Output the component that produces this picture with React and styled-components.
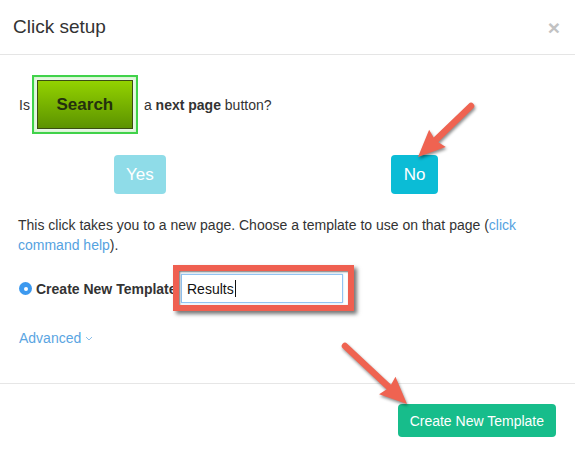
import React from "react";
import styled, { createGlobalStyle } from "styled-components";

const GlobalStyle = createGlobalStyle`
  html, body {
    margin: 0;
    padding: 0;
    background: #fff;
  }
  body {
    font-family: "Liberation Sans", Arial, Helvetica, sans-serif;
    color: #333;
  }
`;

const Modal = styled.div`
  position: relative;
  width: 575px;
  height: 455px;
  background: #fff;
  overflow: hidden;
`;

const Header = styled.div`
  display: flex;
  align-items: center;
  justify-content: space-between;
  height: 54px;
  padding: 0 15px 0 13px;
  border-bottom: 1px solid #e5e5e5;
`;

const Title = styled.h3`
  margin: 0;
  font-size: 19px;
  font-weight: 400;
  color: #333;
`;

const Close = styled.button`
  border: none;
  background: none;
  padding: 0;
  font-family: inherit;
  font-size: 21px;
  font-weight: 700;
  color: #c2c2c2;
  line-height: 1;
  cursor: pointer;
`;

const Body = styled.div`
  padding: 20px 18px 35px 18px;
  font-size: 14px;
`;

const Question = styled.div`
  display: flex;
  align-items: center;
  gap: 2px;
  padding-left: 1px;
`;

const QuestionTail = styled.span`
  margin-left: 4px;
  b {
    font-weight: 700;
  }
`;

const SearchShot = styled.span`
  display: inline-flex;
  padding: 3px;
  border: 2px solid #40d24a;
  background: #e9f8e6;
  box-shadow: inset 0 0 3px #bfeeb8;
`;

const SearchButton = styled.span`
  display: flex;
  align-items: center;
  justify-content: center;
  box-sizing: border-box;
  width: 96px;
  height: 49px;
  border: 1px solid #3b4d12;
  background: linear-gradient(#93d200, #5c9300);
  font-size: 17px;
  font-weight: 700;
  color: #24300e;
`;

const Choices = styled.div`
  display: flex;
  margin-top: 21px;
  padding-left: 96px;
  gap: 225px;
`;

const ChoiceButton = styled.button`
  height: 39px;
  padding: 0 ${(p) => (p.$muted ? "12px" : "13px")};
  border: none;
  border-radius: 4px;
  background: ${(p) => (p.$muted ? "#8fdce8" : "#0bbcd6")};
  color: #fff;
  font-family: inherit;
  font-size: 17px;
  cursor: pointer;
`;

const Paragraph = styled.p`
  margin: 21px 0 0;
  line-height: 20px;
  color: #333;
`;

const Link = styled.a`
  color: #55a2df;
  text-decoration: none;
`;

const TemplateRow = styled.div`
  display: flex;
  align-items: center;
  margin-top: 19px;
  padding-left: 1px;
`;

const Radio = styled.span`
  display: inline-flex;
  align-items: center;
  justify-content: center;
  width: 13px;
  height: 13px;
  border-radius: 50%;
  background: #3c99ef;
  margin-right: 4px;

  &::after {
    content: "";
    width: 4px;
    height: 4px;
    border-radius: 50%;
    background: #fff;
  }
`;

const RadioLabel = styled.span`
  width: 145px;
  white-space: nowrap;
  font-weight: 700;
  color: #333;
`;

const FieldWrap = styled.span`
  position: relative;
  display: inline-flex;
`;

const Field = styled.span`
  display: inline-flex;
  align-items: center;
  box-sizing: border-box;
  width: 162px;
  height: 29px;
  padding: 0 5px;
  border: 1px solid #93c4f2;
  box-shadow: 0 0 2px #b7d8f7;
  background: #fff;
  font-size: 14px;
  color: #111;
`;

const Caret = styled.span`
  display: inline-block;
  width: 1px;
  height: 17px;
  background: #111;
  margin-left: 1px;
`;

const Highlight = styled.span`
  position: absolute;
  top: -9px;
  left: -8px;
  right: -11px;
  bottom: -8px;
  border: 6px solid #ef5f50;
  box-shadow: 3px 3px 4px rgba(0, 0, 0, 0.55),
    inset 1px 1px 2px rgba(0, 0, 0, 0.55);
  pointer-events: none;
`;

const Advanced = styled.a`
  display: inline-flex;
  align-items: center;
  gap: 4px;
  margin-top: 25px;
  line-height: 20px;
  color: #5aa5e2;
  text-decoration: none;
  padding-left: 1px;
`;

const Footer = styled.div`
  display: flex;
  justify-content: flex-end;
  padding: 20px 19px 20px 0;
  border-top: 1px solid #e6e6e6;
`;

const PrimaryButton = styled.button`
  height: 33px;
  padding: 0 12px;
  border: none;
  border-radius: 4px;
  background: #17bd8b;
  color: #fff;
  font-family: inherit;
  font-size: 14px;
  cursor: pointer;
`;

const Overlay = styled.svg`
  position: absolute;
  top: 0;
  left: 0;
  pointer-events: none;
  filter: drop-shadow(1px 2px 1.5px rgba(0, 0, 0, 0.45));
`;

function Arrow({ from, to }) {
  const dx = to[0] - from[0];
  const dy = to[1] - from[1];
  const len = Math.hypot(dx, dy);
  const ux = dx / len;
  const uy = dy / len;
  const headLen = 27;
  const half = 12;
  const bx = to[0] - ux * headLen;
  const by = to[1] - uy * headLen;
  const px = -uy;
  const py = ux;
  const pts = [
    [to[0], to[1]],
    [bx + px * half, by + py * half],
    [bx + ux * 3, by + uy * 3],
    [bx - px * half, by - py * half],
  ]
    .map((p) => p.join(","))
    .join(" ");
  return (
    <g>
      <line
        x1={from[0]}
        y1={from[1]}
        x2={bx + ux * 4}
        y2={by + uy * 4}
        stroke="#ef6351"
        strokeWidth="6.5"
        strokeLinecap="round"
      />
      <polygon points={pts} fill="#ef6351" strokeLinejoin="round" />
    </g>
  );
}

function Chevron() {
  return (
    <svg width="8" height="5" viewBox="0 0 8 5">
      <path d="M1 1l3 3 3-3" fill="none" stroke="#8bbfe9" strokeWidth="1" />
    </svg>
  );
}

export default function App() {
  return (
    <>
      <GlobalStyle />
      <Modal>
        <Header>
          <Title>Click setup</Title>
          <Close aria-label="Close">×</Close>
        </Header>

        <Body>
          <Question>
            <span>Is</span>
            <SearchShot>
              <SearchButton>Search</SearchButton>
            </SearchShot>
            <QuestionTail>
              a <b>next page</b> button?
            </QuestionTail>
          </Question>

          <Choices>
            <ChoiceButton $muted>Yes</ChoiceButton>
            <ChoiceButton>No</ChoiceButton>
          </Choices>

          <Paragraph>
            This click takes you to a new page. Choose a template to use on
            that page (<Link href="#">click command help</Link>).
          </Paragraph>

          <TemplateRow>
            <Radio />
            <RadioLabel>Create New Template</RadioLabel>
            <FieldWrap>
              <Field>
                Results
                <Caret />
              </Field>
              <Highlight />
            </FieldWrap>
          </TemplateRow>

          <Advanced href="#">
            Advanced
            <Chevron />
          </Advanced>
        </Body>

        <Footer>
          <PrimaryButton>Create New Template</PrimaryButton>
        </Footer>

        <Overlay width="575" height="455" viewBox="0 0 575 455">
          <Arrow from={[471, 106]} to={[418, 157]} />
          <Arrow from={[345, 346]} to={[407, 404]} />
        </Overlay>
      </Modal>
    </>
  );
}
